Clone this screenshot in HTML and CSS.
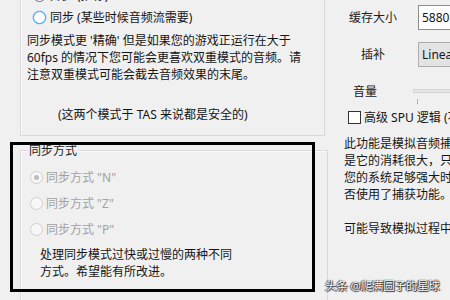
FILE: index.html
```html
<!DOCTYPE html>
<html lang="zh-CN">
<head>
<meta charset="utf-8">
<link rel="stylesheet" href="styles.css">
</head>
<body>
<div class="screen">
  <div class="left">
    <div class="group top-group">
      <div class="radio-row"><span class="radio"></span>异步 (推荐)</div>
      <div class="radio-row"><span class="radio focus"></span>同步 (某些时候音频流需要)</div>
      <p class="desc">同步模式更 '精确' 但是如果您的游戏正运行在大于<br>60fps 的情况下您可能会更喜欢双重模式的音频。请<br>注意双重模式可能会截去音频效果的末尾。</p>
      <p class="note">(这两个模式于 TAS 来说都是安全的)</p>
    </div>
    <div class="group sync-group">
      <div class="legend">同步方式</div>
      <div class="radio-row big disabled"><span class="radio checked"></span>同步方式 "N"</div>
      <div class="radio-row big disabled"><span class="radio"></span>同步方式 "Z"</div>
      <div class="radio-row big disabled"><span class="radio"></span>同步方式 "P"</div>
      <p class="desc2">处理同步模式过快或过慢的两种不同<br>方式。希望能有所改进。</p>
    </div>
  </div>
  <div class="right">
    <div class="field first"><span class="label">缓存大小</span><span class="input">5880</span></div>
    <div class="field second"><span class="label">插补</span><span class="select">Linear</span></div>
    <div class="volume"><span class="vlabel">音量</span><span class="slider"><span class="track"></span><span class="tick"></span></span></div>
    <div class="check-row"><span class="checkbox"></span>高级 SPU 逻辑 (不推荐)</div>
    <p class="info">此功能是模拟音频捕获的一种高级方式，但<br>是它的消耗很大，只有在您的系统<br>您的系统足够强大时才使用。请检查是<br>否使用了捕获功能。<br><br>可能导致模拟过程中出现问题。</p>
  </div>
  <div class="annotation"></div>
  <div class="watermark">头条 @爬满圆子的星球</div>
</div>
</body>
</html>
```

FILE: styles.css
```css
* { box-sizing: border-box; }
html, body { margin: 0; padding: 0; }
body {
  background: #f0f0f0;
  font-family: "Noto Sans", "Noto Sans CJK SC", sans-serif;
  font-size: 12px;
  line-height: 17px;
  color: #151515;
}
.screen {
  position: relative;
  width: 450px;
  height: 300px;
  overflow: hidden;
  display: flex;
  white-space: nowrap;
}
p { margin: 0; }

.left {
  width: 328px;
  flex: none;
  padding-left: 20px;
  display: flex;
  flex-direction: column;
}
.group {
  border: 1px solid #d9d9d9;
  box-shadow: inset 1px 1px 0 #fafafa;
}
.top-group {
  margin-top: -16px;
  margin-right: 3px;
  border-top: none;
  padding: 0 0 12px 6px;
}
.radio-row {
  height: 22px;
  display: flex;
  align-items: center;
  padding-left: 6px;
}
.radio {
  width: 13px;
  height: 13px;
  border-radius: 50%;
  border: 1px solid #6d6d6d;
  background: #fff;
  margin-right: 4px;
  flex: none;
  position: relative;
}
.radio.focus { border-color: #4d9be8; box-shadow: 0 0 0 0.5px #9cc9f5; }
.desc { margin-top: 4px; }
.note { margin-top: 23px; padding-left: 31px; }

.sync-group {
  margin-top: 14px;
  height: 170px;
  border-bottom: none;
  padding-left: 9px;
}
.legend {
  margin-top: -9px;
  margin-left: -2px;
  width: fit-content;
  padding: 0 1px;
  background: #f0f0f0;
  color: #222;
}
.radio-row.big { height: 26px; padding-left: 0; }
.legend + .radio-row { margin-top: 5px; }
.disabled { color: #a2a2a2; }
.disabled .radio { border-color: #cfcfcf; background: #f7f7f7; margin-right: 3px; }
.radio.checked::after {
  content: "";
  position: absolute;
  left: 3px; top: 3px;
  width: 5px; height: 5px;
  border-radius: 50%;
  background: #bdbdbd;
}
.desc2 { margin-top: 4px; padding-left: 10px; }

.right {
  flex: 1;
  display: flex;
  flex-direction: column;
}
.field { display: flex; align-items: center; height: 25px; }
.field.first { margin-top: 5px; }
.field.second { margin-top: 12px; }
.label {
  width: 66px;
  margin-left: 12px;
  margin-right: 12px;
  text-align: center;
  color: #222;
}
.input, .select {
  height: 25px;
  width: 80px;
  padding: 3px 0 0 3px;
  flex: none;
}
.input { background: #fff; border: 1px solid #8c8c8c; }
.select { background: #e3e3e3; border: 1px solid #adadad; }
.volume {
  margin-top: 16px;
  display: flex;
  padding-left: 25px;
  height: 17px;
}
.vlabel { width: 60px; }
.slider { position: relative; flex: 1; }
.track {
  position: absolute;
  left: 0; top: 6px;
  width: 60px; height: 4px;
  background: #e7e7e7;
  border: 1px solid #d2d2d2;
}
.tick {
  position: absolute;
  left: 4px; top: 16px;
  width: 1px; height: 5px;
  background: #b0b0b0;
}
.check-row {
  margin-top: 9px;
  display: flex;
  align-items: center;
  padding-left: 20px;
  height: 17px;
}
.checkbox {
  width: 13px; height: 13px;
  border: 1px solid #333;
  background: #fff;
  margin-right: 3px;
  flex: none;
}
.info { margin-top: 9px; padding-left: 16px; }

.annotation {
  position: absolute;
  left: 10px; top: 142px;
  width: 305px; height: 150px;
  border: 3px solid #000;
}
.watermark {
  position: absolute;
  left: 325px; top: 277px;
  font-size: 11.5px;
  letter-spacing: -0.2px;
  color: #fff;
  text-shadow: 0 0 1px #000, 1px 1px 1px #222, -1px 0 1px #444;
}
```
